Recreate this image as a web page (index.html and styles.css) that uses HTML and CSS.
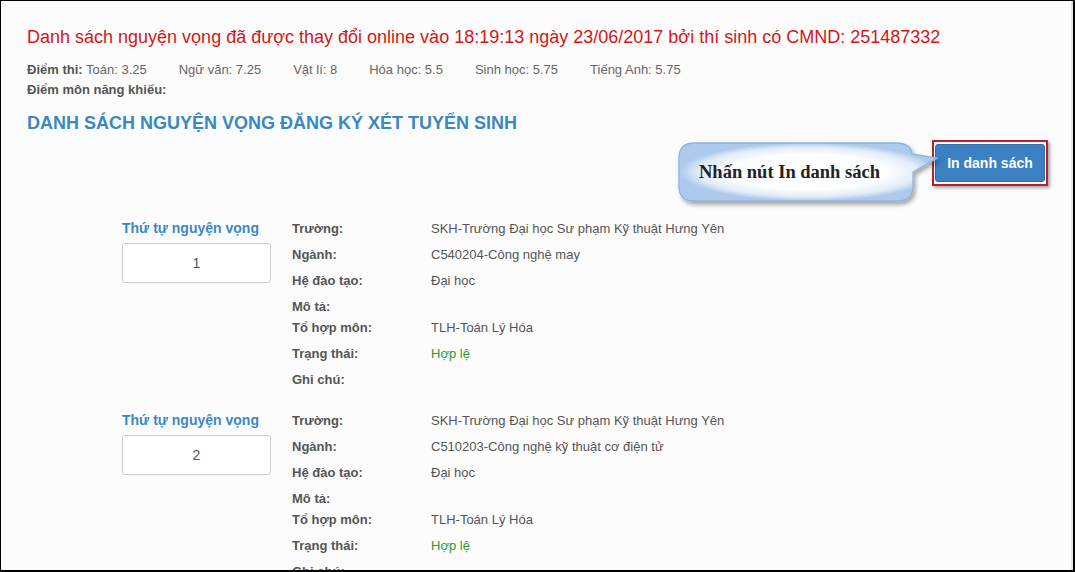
FILE: index.html
```html
<!DOCTYPE html>
<html lang="vi">
<head>
<meta charset="utf-8">
<title>Danh sách nguyện vọng</title>
<link rel="stylesheet" href="styles.css">
</head>
<body>
<div class="frame">
  <div class="content">
    <h2 class="notice">Danh sách nguyện vọng đã được thay đổi online vào 18:19:13 ngày 23/06/2017 bởi thí sinh có CMND: 251487332</h2>
    <div class="scores">
      <span><b>Điểm thi:</b> Toán: 3.25</span>
      <span>Ngữ văn: 7.25</span>
      <span>Vật lí: 8</span>
      <span>Hóa học: 5.5</span>
      <span>Sinh học: 5.75</span>
      <span>Tiếng Anh: 5.75</span>
    </div>
    <div class="scores"><b>Điểm môn năng khiếu:</b></div>
    <h3 class="section-title">DANH SÁCH NGUYỆN VỌNG ĐĂNG KÝ XÉT TUYỂN SINH</h3>

    <div class="toolbar">
      <div class="callout">
        <svg class="callout-shape" width="266" height="70" viewBox="0 0 266 70">
          <defs>
            <radialGradient id="glow" cx="0.5" cy="0.5" r="0.5">
              <stop offset="0" stop-color="#ffffff"/>
              <stop offset="0.62" stop-color="#fbfdff"/>
              <stop offset="0.85" stop-color="#e2ecf8"/>
              <stop offset="1" stop-color="#adc9ec"/>
            </radialGradient>
            <filter id="shadow" x="-10%" y="-20%" width="130%" height="160%">
              <feDropShadow dx="2" dy="3" stdDeviation="2" flood-color="#000" flood-opacity="0.35"/>
            </filter>
          </defs>
          <path d="M16 1 H218 Q233 1 234 12 L259 16 L235 30 V44 Q235 59 219 59 H16 Q1 59 1 44 V16 Q1 1 16 1 Z" fill="url(#glow)" stroke="#8fb3e0" stroke-width="1.3" filter="url(#shadow)"/>
        </svg>
        <span class="callout-text">Nhấn nút In danh sách</span>
      </div>
      <div class="highlight">
        <button class="btn-print" type="button">In danh sách</button>
      </div>
    </div>

    <div class="wish">
      <div class="wish-order">
        <div class="order-title">Thứ tự nguyện vọng</div>
        <div class="order-box">1</div>
      </div>
      <dl class="info">
        <dt>Trường:</dt><dd>SKH-Trường Đại học Sư phạm Kỹ thuật Hưng Yên</dd>
        <dt>Ngành:</dt><dd>C540204-Công nghệ may</dd>
        <dt>Hệ đào tạo:</dt><dd>Đại học</dd>
        <dt>Mô tả:</dt><dd></dd>
        <dt>Tổ hợp môn:</dt><dd>TLH-Toán Lý Hóa</dd>
        <dt>Trạng thái:</dt><dd class="ok">Hợp lệ</dd>
        <dt>Ghi chú:</dt><dd></dd>
      </dl>
    </div>

    <div class="wish">
      <div class="wish-order">
        <div class="order-title">Thứ tự nguyện vọng</div>
        <div class="order-box">2</div>
      </div>
      <dl class="info">
        <dt>Trường:</dt><dd>SKH-Trường Đại học Sư phạm Kỹ thuật Hưng Yên</dd>
        <dt>Ngành:</dt><dd>C510203-Công nghệ kỹ thuật cơ điện tử</dd>
        <dt>Hệ đào tạo:</dt><dd>Đại học</dd>
        <dt>Mô tả:</dt><dd></dd>
        <dt>Tổ hợp môn:</dt><dd>TLH-Toán Lý Hóa</dd>
        <dt>Trạng thái:</dt><dd class="ok">Hợp lệ</dd>
        <dt>Ghi chú:</dt><dd></dd>
      </dl>
    </div>
  </div>
</div>
</body>
</html>
```

FILE: styles.css
```css
* { box-sizing: border-box; }
html, body { margin: 0; padding: 0; }
body {
  width: 1075px;
  height: 572px;
  overflow: hidden;
  font-family: "Liberation Sans", Arial, sans-serif;
  background: #000;
}
.frame {
  height: 572px;
  border-top: 1px solid #000;
  border-left: 1px solid #000;
  border-right: 2px solid #000;
  border-bottom: 2px solid #000;
  background: #fcfcfc;
  overflow: hidden;
}
.content {
  height: 100%;
  border-right: 2px solid #e4e4e4;
  padding: 26px 23px 0 26px;
}
.notice {
  margin: 0;
  font-size: 18px;
  line-height: 20px;
  font-weight: normal;
  color: #d01818;
}
.scores {
  display: flex;
  gap: 32px;
  font-size: 13px;
  line-height: 20px;
  color: #666;
}
.scores b { color: #555; }
.notice + .scores { margin-top: 13px; }
.section-title {
  margin: 11px 0 0;
  font-size: 18px;
  line-height: 24px;
  color: #3a88c2;
  font-weight: bold;
}
.toolbar {
  position: relative;
  display: flex;
  justify-content: flex-end;
  margin-top: 5px;
}
.highlight {
  border: 2px solid #b5222b;
  padding: 2px 1px;
  box-shadow: 2px 2px 3px rgba(0,0,0,0.35);
}
.btn-print {
  display: block;
  width: 110px;
  height: 38px;
  border: 1px solid #2f6ea8;
  border-radius: 3px;
  background: #3b80c2;
  color: #fff;
  font-family: "Liberation Sans", Arial, sans-serif;
  font-weight: bold;
  font-size: 14px;
  padding: 0;
}
.callout {
  position: absolute;
  right: 134px;
  top: 2px;
  width: 236px;
  height: 60px;
}
.callout-shape {
  position: absolute;
  left: 0;
  top: 0;
  overflow: visible;
}
.callout-text {
  position: relative;
  display: block;
  line-height: 60px;
  padding-left: 21px;
  font-family: "Liberation Serif", "Times New Roman", serif;
  font-weight: bold;
  font-size: 18.5px;
  color: #222;
}
.wish {
  display: flex;
  padding-left: 95px;
  margin-top: 32px;
}
.wish + .wish { margin-top: 20px; }
.wish-order { width: 149px; margin-right: 21px; }
.order-title {
  font-size: 14px;
  font-weight: bold;
  line-height: 21px;
  color: #3a88c2;
}
.order-box {
  margin-top: 4px;
  height: 40px;
  border: 1px solid #ccc;
  border-radius: 3px;
  background: #fff;
  text-align: center;
  line-height: 38px;
  font-size: 14px;
  color: #555;
}
.info {
  margin: 0;
  display: grid;
  grid-template-columns: 139px 1fr;
  align-items: start;
  font-size: 13px;
  line-height: 21px;
  color: #555;
}
.info dt { font-weight: bold; }
.info dd { margin: 0 0 5px; }
.info dd:empty { margin-bottom: 0; }
.info dd.ok { color: #2a9a2a; }
```
